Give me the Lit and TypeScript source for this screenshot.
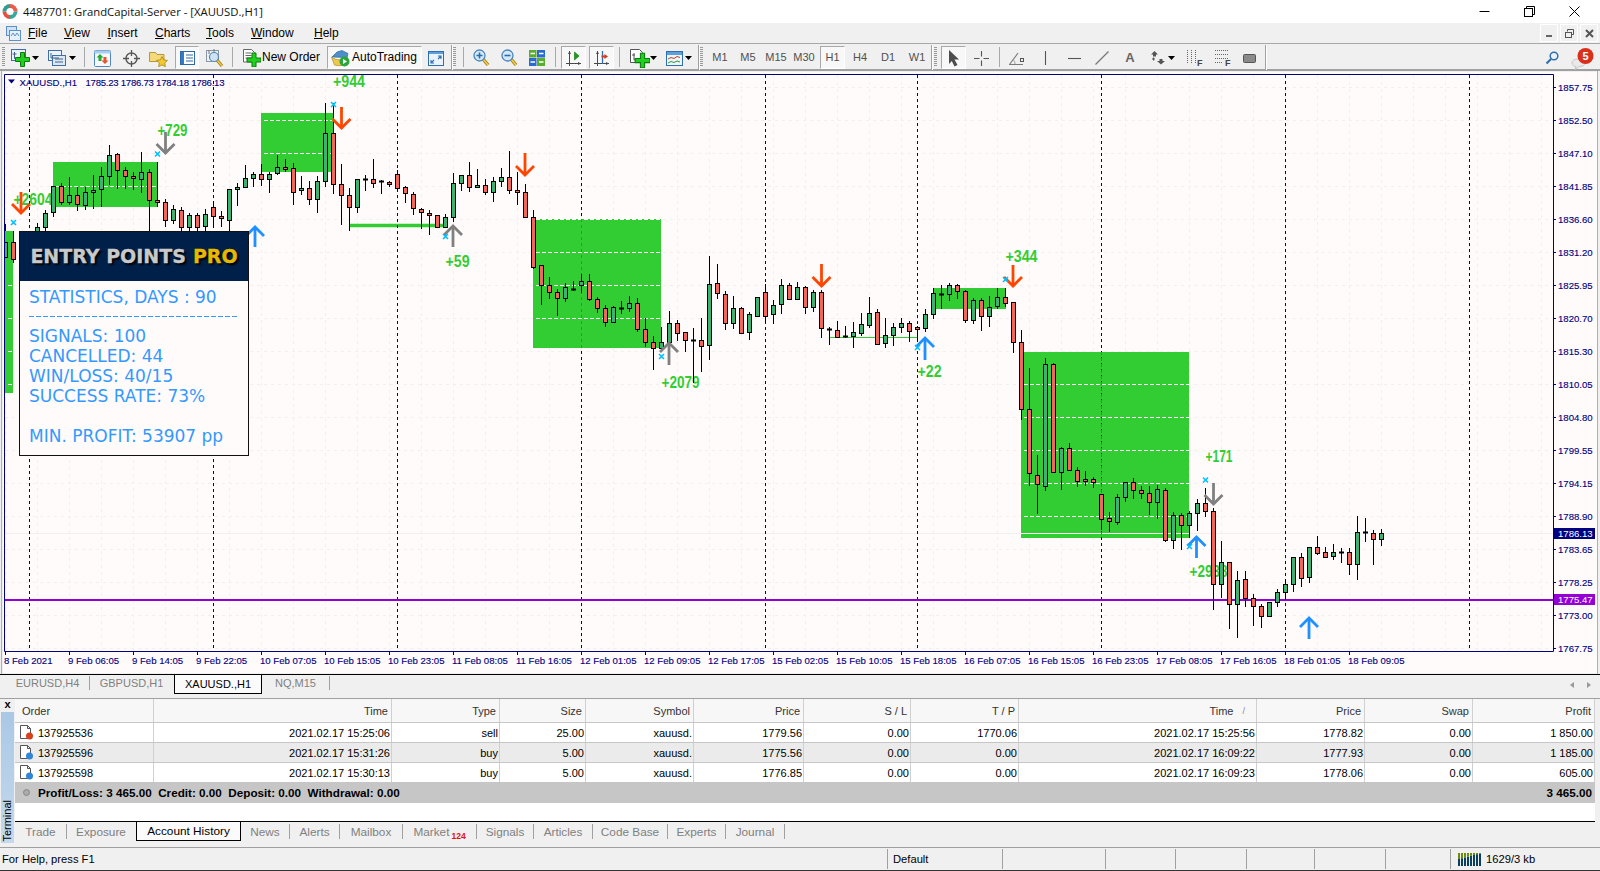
import { LitElement, html, css, svg } from "lit";
import { customElement } from "lit/decorators.js";

type C = [number, number, number, number, string] | null;

const Z4: C[] = [
[462,483,517,560,"g"],[483,578,517,568,"r"],null,null,
[460,490,472,490,"g"],[420,490,428,472,"g"],[349,440,349,427,"g"],[340,405,349,395,"r"],[322,405,376,395,"g"],[352,422,376,403,"r"],[350,420,367,404,"g"],[315,418,361,367,"g"],[292,412,319,358,"g"],[225,345,256,319,"g"],[248,358,253,301,"r"],[292,358,301,319,"r"],[305,360,319,325,"r"],[246,368,305,328,"g"],[297,490,305,390,"r"],[277,410,391,397,"r"],[388,470,397,451,"r"],[405,462,418,451,"g"],[410,490,421,472,"r"],[430,490,436,472,"g"],[430,490,436,470,"r"],[418,490,431,469,"g"],[392,470,412,439,"r"],[422,472,439,445,"r"],[357,490,358,449,"g"],[340,408,352,358,"g"],[286,352,325,352,"g"],[306,350,313,325,"g"],[282,348,313,328,"r"],[305,368,313,328,"g"],[255,314,290,310,"g"],[268,307,290,298,"r"],[278,405,295,365,"r"],[318,375,355,361,"g"],[332,405,355,388,"r"],[318,428,334,388,"g"],[100,350,190,334,"g"],[100,372,190,343,"r"],[282,465,343,376,"r"],[355,482,376,412,"r"],[328,428,328,412,"g"],[315,362,327,329,"g"],[268,355,328,338,"r"],[330,372,333,335,"g"],[332,350,335,341,"r"],[300,362,313,355,"r"],[348,400,352,370,"r"],[365,435,373,415,"r"],[415,478,418,427,"r"],[420,495,428,436,"r"],[436,475,436,472,"r"],[432,475,440,472,"g"],[310,455,340,440,"g"],[315,362,316,340,"g"],[275,365,316,352,"r"],[298,352,344,352,"g"],[328,375,344,367,"r"],[320,395,332,367,"g"],[295,350,322,332,"g"],[243,372,320,361,"r"],[305,405,361,367,"r"],[342,445,367,442,"r"]];

const Z5: C[] = [
[30,208,52,200,"r"],[196,315,196,256,"r"],[232,298,256,277,"r"],[268,348,277,295,"r"],[248,305,262,295,"g"],[243,272,266,268,"g"],[222,278,244,256,"g"],[222,302,244,298,"r"],[290,338,298,325,"r"],[316,380,325,365,"r"],[318,368,322,365,"g"],[304,342,323,325,"g"],[288,335,310,325,"g"],[294,396,310,388,"r"],[355,442,388,427,"r"],[408,510,427,445,"r"],[380,447,427,445,"g"],[334,430,370,427,"g"],[360,422,370,400,"r"],[395,456,397,421,"r"],[384,550,421,423,"g"],[354,516,421,439,"r"],[168,480,253,436,"g"],[192,296,250,280,"r"],[272,390,283,370,"r"],[288,387,325,370,"g"],[322,402,325,398,"r"],[336,420,343,397,"g"],[292,347,292,347,"g"],[253,370,277,347,"r"],[300,372,316,343,"g"],[238,342,256,313,"g"],[250,300,256,296,"r"],[246,300,262,296,"g"],[258,342,262,322,"r"],[270,335,277,322,"g"],[270,414,277,385,"r"],[380,435,388,391,"g"],[364,414,391,410,"r"],[378,415,409,411,"g"],[366,444,397,409,"g"],[340,408,373,400,"g"],[292,384,340,376,"g"],[328,434,337,433,"r"],[354,444,406,430,"g"],[370,438,382,406,"g"],[354,398,370,382,"g"],[364,426,370,394,"r"],[378,420,382,388,"r"],[328,396,343,385,"g"],[264,358,280,343,"g"],[254,326,281,283,"g"],[250,302,254,283,"g"],[252,296,254,274,"r"],[270,368,274,361,"r"],[295,372,301,361,"g"],[295,392,301,349,"r"],[288,380,322,349,"g"],[264,328,292,319,"g"],[264,320,292,310,"r"],[307,458,307,427,"r"],[390,660,427,628,"r"],[505,858,628,820,"r"],[766,942,824,853,"r"],[475,872,493,857,"g"],[490,820,493,815,"r"]];

const Z6: C[] = [
[322,450,325,395,"g"],[310,392,325,389,"r"],[382,440,391,422,"r"],[393,438,418,423,"r"],[412,443,418,425,"r"],[462,570,463,537,"r"],[517,575,534,542,"r"],[462,555,472,545,"g"],[426,485,427,472,"g"],[415,477,427,449,"r"],[438,476,451,458,"r"],[437,525,458,485,"r"],[435,537,448,485,"g"],[443,605,451,599,"r"],[515,627,526,601,"g"],[520,630,526,554,"r"],[514,595,520,554,"g"],[477,572,490,520,"g"],[445,530,490,514,"r"],[505,810,514,733,"r"],[603,775,667,733,"g"],[667,867,667,793,"r"],[693,893,721,793,"g"],[693,800,718,775,"r"],[763,858,775,799,"r"],[793,863,799,829,"r"],[787,832,787,829,"g"],[748,800,757,787,"g"],[718,780,733,755,"g"],[652,755,652,733,"g"],[640,740,652,715,"r"],[622,730,622,712,"g"],[588,645,622,640,"r"],[620,653,637,650,"r"],[612,660,637,649,"g"],[625,670,637,638,"g"],[625,705,637,673,"r"],[528,720,577,671,"g"],[534,605,577,580,"g"],[571,675,580,598,"r"],[568,618,580,598,"g"]];

const conv = (list: C[], y0: number) =>
  list.map((c) => (c ? ([y0 + c[0] / 3, y0 + c[1] / 3, y0 + c[2] / 3, y0 + c[3] / 3, c[4]] as [number, number, number, number, string]) : null));
const candles = [...conv(Z4, 70), ...conv(Z5, 200), ...conv(Z6, 340)];

const snap = (v: number) => Math.round(v) + 0.5;

const prices = ["1857.75","1852.50","1847.10","1841.85","1836.60","1831.20","1825.95","1820.70","1815.30","1810.05","1804.80","1799.55","1794.15","1788.90","1783.65","1778.25","1773.00","1767.75"];
const dates = ["8 Feb 2021","9 Feb 06:05","9 Feb 14:05","9 Feb 22:05","10 Feb 07:05","10 Feb 15:05","10 Feb 23:05","11 Feb 08:05","11 Feb 16:05","12 Feb 01:05","12 Feb 09:05","12 Feb 17:05","15 Feb 02:05","15 Feb 10:05","15 Feb 18:05","16 Feb 07:05","16 Feb 15:05","16 Feb 23:05","17 Feb 08:05","17 Feb 16:05","18 Feb 01:05","18 Feb 09:05"];
const periods = [29.5, 213.5, 397.5, 581.5, 765.5, 917.5, 1101.5, 1285.5, 1469.5];

const boxes: { x: number; y: number; w: number; h: number; dash: number[]; solid?: number }[] = [
  { x: 5, y: 231, w: 8, h: 162, dash: [285, 318, 351, 384] },
  { x: 53, y: 162, w: 105, h: 45, dash: [186] },
  { x: 261, y: 113, w: 73, h: 59, dash: [120, 153] },
  { x: 533, y: 219, w: 128, h: 129, dash: [219, 252, 285, 318] },
  { x: 933, y: 288, w: 73, h: 21, dash: [] },
  { x: 1021, y: 352, w: 168, h: 186, dash: [384, 417, 450, 483, 516], solid: 533 },
];

const labels: [string, number, number, number][] = [
  ["+2604", 13.5, 205, 39], ["+729", 157.5, 136, 30], ["+944", 333, 87, 32], ["+59", 445.5, 267, 24],
  ["+2079", 661.5, 388, 38], ["+22", 917.5, 377, 24], ["+344", 1005.5, 262, 32], ["+171", 1205.5, 462, 27], ["+2938", 1189.5, 577, 38],
];
const arrows: [number, number, number, string, number][] = [
  [21, 192, 213, "#ff4500", 1], [341.5, 107, 128, "#ff4500", 1], [525, 153, 175, "#ff4500", 1], [821.5, 264, 286, "#ff4500", 1], [1013, 265, 286, "#ff4500", 1],
  [165.5, 132, 153, "#808080", 1], [1213.5, 483, 504, "#808080", 1],
  [255, 227, 247, "#1e90ff", 0], [925, 338, 360, "#1e90ff", 0], [1196.5, 537, 558, "#1e90ff", 0], [1309, 618, 639, "#1e90ff", 0],
  [453, 226, 247, "#808080", 0], [669, 343, 365, "#808080", 0],
];
const crosses = [[13.5, 222.5], [157.5, 154], [333.5, 104.5], [445.5, 236.5], [661.5, 356.5], [917.5, 347.5], [1005.5, 279.5], [1205.5, 480], [1189.5, 546.5]];

/* ---------- icons ---------- */
const plus = (x: number, y: number, s = 1) => svg`<path transform="translate(${x} ${y}) scale(${s})" d="M-2-7h4v5h5v4h-5v5h-4v-5h-5v-4h5z" fill="#1fd01f" stroke="#0c7a0c" stroke-width="1"/>`;
const ic = (w: number, h: number, body: unknown) => html`<svg width=${w} height=${h} viewBox="0 0 ${w} ${h}">${body}</svg>`;
const winAxes = svg`<path d="M3.500 3v6.500h8M1.500 5h4M9.500 8v-3" fill="none" stroke="#44648c"/>`;
const caret = html`<svg width="7" height="4" viewBox="0 0 7 4"><path d="M0 0h7L3.500 4z" fill="#000"/></svg>`;
const mag = (inner: unknown) => ic(17, 18, svg`<path d="M10 10l5 6" stroke="#a8841c" stroke-width="3.400"/><path d="M10 10l5 6" stroke="#f4cf50" stroke-width="1.400"/><circle cx="6.500" cy="6.500" r="5.500" fill="#d5e8f7" stroke="#4a86c0" stroke-width="1.300"/>${inner}`);
const chartAxes = (inner: unknown) => ic(17, 17, svg`<path d="M4.500 1v15M1 13.500h15" stroke="#4a4a4a" fill="none"/><path d="M4.500 1l-1.500 3h3zM16 13.500l-3-1.500v3z" fill="#4a4a4a"/>${inner}`);

const I = {
  app: ic(16, 17, svg`<path d="M8 8.500V1a7.500 7.500 0 0 1 7.500 7.500z" fill="#ee5a4a"/><path d="M8 8.500h7.500A7.500 7.500 0 0 1 8 16z" fill="#38a89d"/><path d="M8 8.500V16a7.500 7.500 0 0 1-7.500-7.500z" fill="#e8503e"/><path d="M8 8.500H.5A7.500 7.500 0 0 1 8 1z" fill="#2e9e94"/><circle cx="8" cy="8.500" r="3.600" fill="#fff"/>`),
  menu: ic(16, 16, svg`<rect x="1.500" y="1.500" width="10" height="9" fill="#cfe2f6" stroke="#5f8fc7"/><rect x="4.500" y="5.500" width="11" height="10" fill="#e6f0fb" stroke="#5f8fc7"/><path d="M6 11l2-3 2 3 2-3 2 3" fill="none" stroke="#5f8fc7"/>`),
  newChart: ic(20, 18, svg`<rect x=".5" y=".5" width="14" height="11" fill="#eaf2fb" stroke="#3f6fa8"/>${winAxes}${plus(11.5, 10.500)}`),
  profiles: ic(18, 16, svg`<rect x=".5" y=".5" width="13" height="10" fill="#eef3f9" stroke="#3f6fa8"/><rect x="4.500" y="5.500" width="13" height="10" fill="#dde8f5" stroke="#3f6fa8"/><path d="M3 3v5h8M7 9h8M7 12h8" fill="none" stroke="#44648c"/>`),
  market: ic(17, 17, svg`<rect x=".5" y=".5" width="16" height="16" rx="1" fill="#f5f9fd" stroke="#4f86bf"/><rect x=".5" y=".5" width="16" height="3" fill="#a9cdee"/><path d="M6 4l3.500 3.500H7.500V11h-3V7.500h-2z" fill="#27a82e"/><path d="M11 14l3.500-3.500h-2V7h-3v3.500h-2z" fill="#e5552f"/>`),
  cross: ic(17, 17, svg`<circle cx="8.500" cy="8.500" r="5.500" fill="none" stroke="#555" stroke-width="1.400"/><path d="M8.500 0v6M8.500 11v6M0 8.500h6M11 8.500h6" stroke="#555" stroke-width="1.300"/>`),
  folder: ic(19, 17, svg`<path d="M.5 2.500h6l1.500 2h7v7H.5z" fill="#f6d978" stroke="#b8973b"/><path d="M13 6.500l1.700 3.400 3.800.5-2.800 2.600.7 3.700-3.400-1.800-3.400 1.800.7-3.700-2.800-2.600 3.800-.5z" fill="#f2c92e" stroke="#a8841c" stroke-width=".8"/>`),
  nav: ic(15, 14, svg`<rect x=".5" y=".5" width="14" height="13" fill="#fff" stroke="#2f68a8"/><rect x="1" y="1" width="3" height="12" fill="#2f7bc8"/><path d="M6 4h7M6 7h7M6 10h7" stroke="#2f68a8"/>`),
  magChart: ic(18, 18, svg`<rect x=".5" y="1.500" width="12" height="11" fill="#eef1f4" stroke="#8b96a2"/><path d="M3 1v4M8 0v4" stroke="#777"/><path d="M11 11l5 6" stroke="#a8841c" stroke-width="3.200"/><path d="M11 11l5 6" stroke="#f4cf50" stroke-width="1.200"/><circle cx="8" cy="8" r="4.500" fill="#cfe3f5" stroke="#5088bd" stroke-width="1.200"/>`),
  order: ic(18, 18, svg`<path d="M.5.5h8l3 3v9.500H.5z" fill="#fff" stroke="#666"/><path d="M2.500 4h6M2.500 6.500h6M2.500 9h6" stroke="#666"/>${plus(11, 11)}`),
  auto: ic(19, 17, svg`<path d="M1 7l5-5 5-1.500 6 3-1 4z" fill="#4d8fc9" stroke="#2e6aa0" stroke-width=".7"/><path d="M.5 7c5 4 11 3 16 0v6c-3 3-10 3-13 2z" fill="#f0c94a" stroke="#a88b2a" stroke-width=".7"/><circle cx="13.500" cy="11.500" r="5" fill="#2aa63a"/><path d="M12 9l4 2.500-4 2.500z" fill="#fff"/>`),
  full: ic(16, 15, svg`<rect x=".5" y=".5" width="15" height="14" fill="#eaf3fb" stroke="#2f6fb0" stroke-width="1"/><rect x="1" y="1" width="14" height="2" fill="#5ea1da"/><path d="M3 12l3-3M3 9v3h3M13 5l-3 3M10 5h3v3" fill="none" stroke="#2f6fb0" stroke-width="1.100"/>`),
  zoomIn: mag(svg`<path d="M3.500 6.500h6M6.500 3.500v6" stroke="#2b6cab" stroke-width="1.600"/>`),
  zoomOut: mag(svg`<path d="M3.500 6.500h6" stroke="#2b6cab" stroke-width="1.600"/>`),
  tile: ic(16, 16, svg`<rect width="7.500" height="7.500" fill="#5aad2f"/><rect x="8" width="8" height="7.500" fill="#2a6bd0"/><rect y="8" width="7.500" height="8" fill="#2a6bd0"/><rect x="8" y="8" width="8" height="8" fill="#5aad2f"/><path d="M1.500 3.500h4.500M10 3.500h4.500M1.500 12h4.500M10 12h4.500" stroke="#fff" stroke-width="1.600"/>`),
  shift: chartAxes(svg`<path d="M9.500 2l4.500 4-4.500 4z" fill="#18a018" stroke="#0c6c0c" stroke-width=".6"/>`),
  scroll: chartAxes(svg`<path d="M9.500 1v13" stroke="#2f6fb0" stroke-width="1.300"/><path d="M15 6.500l-3.500-2.500v1.500h-3v2h3v1.500z" fill="#d43c1c"/>`),
  ind: ic(20, 19, svg`<path d="M.5.5h9l3 3v10H.5z" fill="#fff" stroke="#555"/><path d="M4 4v7h6M2 6h3" fill="none" stroke="#555"/>${plus(12.5, 11.5, 1.05)}`),
  tpl: ic(17, 15, svg`<rect x=".5" y=".5" width="16" height="14" fill="#eef4fb" stroke="#2f6fb0"/><rect x="1" y="1" width="15" height="3" fill="#5ea1da"/><path d="M2 8l3-1.500 3 1 3-2 3 1" fill="none" stroke="#b5481c"/><path d="M2 12l3-1.500 3 1 3-1.500 3 1" fill="none" stroke="#2d9c2d"/>`),
  cursor: ic(12, 17, svg`<path d="M1 0l10 9.500H6.500L9.500 15l-3 1.500L3.800 11 1 14z" fill="#4d4d4d"/>`),
  crosshair: ic(15, 15, svg`<path d="M7.500 0v5.500M7.500 9.500V15M0 7.500h5.500M9.500 7.500H15" stroke="#555" stroke-width="1.100"/>`),
  angle: ic(16, 14, svg`<path d="M0 13.500h14M.5 13.500L9 2" fill="none" stroke="#7a7a7a" stroke-width="1.100"/><path d="M6 13c0-2-1-3.500-2-4.500" fill="none" stroke="#999"/><rect x="11.500" y="7.500" width="3" height="3" fill="none" stroke="#555"/>`),
  vline: ic(3, 14, svg`<path d="M1.500 0v14" stroke="#555" stroke-width="1.100"/>`),
  hline: ic(13, 3, svg`<path d="M0 1.500h13" stroke="#555" stroke-width="1.100"/>`),
  tline: ic(14, 14, svg`<path d="M.5 13.500L13.500.5" stroke="#777" stroke-width="1.200"/>`),
  arrowsTool: ic(17, 14, svg`<path d="M4.500 0l3.500 3.500-2 0v2h-3v-2h-2z" fill="#555"/><path d="M11 13.500l4-3.500h-2.500V8h-3v2H7z" fill="#555"/><path d="M2 8h3M3.500 6.500v3" stroke="#555"/>`),
  vgrid: html`<svg width="16" height="17" viewBox="0 0 16 17"><path d="M.5 0v14M4.500 0v14M8.500 0v14" stroke="#666" stroke-dasharray="1 1"/><text x="10" y="16" class="ftxt">F</text></svg>`,
  hgrid: html`<svg width="16" height="17" viewBox="0 0 16 17"><path d="M0 .5h14M0 4.500h14M0 8.500h14M0 12.500h8" stroke="#666" stroke-dasharray="1 1"/><text x="10" y="16" class="ftxt">F</text></svg>`,
  rect: ic(13, 9, svg`<rect x=".5" y=".5" width="12" height="8" rx="1" fill="#8a8a8a" stroke="#555"/>`),
  search: ic(14, 14, svg`<circle cx="9" cy="5" r="3.800" fill="#eaf3fb" stroke="#2f6fb0" stroke-width="1.500"/><path d="M6 8L1.500 12.500" stroke="#2f6fb0" stroke-width="2.200"/>`),
  chat: html`<svg width="24" height="24" viewBox="0 0 24 24"><path d="M7 13c-4 0-6 2-6 4s2 3.500 4 3.500l-1 3 4-3c4 0 6-1.500 6-3.500s-3-4-7-4z" fill="#e9e9e9" stroke="#c4c4c4"/><circle cx="14.500" cy="10" r="8" fill="#d9301c"/><text x="14.500" y="14" class="badge">5</text></svg>`,
  min: ic(11, 11, svg`<path d="M.5 5.500h10" stroke="#000"/>`),
  max: ic(11, 11, svg`<path d="M2.500 2.500v-2h8v8h-2" fill="none" stroke="#000"/><rect x=".5" y="2.500" width="8" height="8" fill="none" stroke="#000"/>`),
  close: ic(11, 11, svg`<path d="M.5.5l10 10M10.500.5l-10 10" stroke="#000"/>`),
  cMin: ic(9, 9, svg`<rect x="1" y="6" width="6" height="2" fill="#666"/>`),
  cMax: ic(9, 9, svg`<path d="M2.500 2.500V.5h6v5h-2" fill="none" stroke="#555"/><rect x=".5" y="3.500" width="6" height="5" fill="none" stroke="#555"/>`),
  cClose: ic(9, 9, svg`<path d="M1 1l7 7M8 1L1 8" stroke="#555" stroke-width="2"/>`),
  doc: (col: string) => ic(15, 15, svg`<path d="M1.500.5h7l3 3v10h-10z" fill="#fff" stroke="#555"/><path d="M8.500.5v3h3" fill="none" stroke="#555"/><circle cx="10.500" cy="11" r="3.500" fill=${col}/>`),
};

const toolbar: { a: number; b: number; c?: unknown; k?: string }[] = [
  { a: 2, b: 5, k: "grip" },
  { a: 11, b: 31, c: I.newChart }, { a: 32, b: 39, c: caret },
  { a: 48, b: 66, c: I.profiles }, { a: 69, b: 76, c: caret },
  { a: 84, b: 85, k: "sep" },
  { a: 94, b: 111, c: I.market }, { a: 123, b: 140, c: I.cross }, { a: 149, b: 168, c: I.folder },
  { a: 175, b: 199, c: I.nav, k: "on" }, { a: 206, b: 224, c: I.magChart },
  { a: 232, b: 233, k: "sep" },
  { a: 243, b: 261, c: I.order }, { a: 262, b: 320, c: "New Order", k: "txt" },
  { a: 327, b: 422, c: html`${I.auto}<span class="atxt">AutoTrading</span>`, k: "on wide" },
  { a: 428, b: 444, c: I.full },
  { a: 451, b: 452, k: "edge" }, { a: 453, b: 456, k: "grip" }, { a: 463, b: 464, k: "sep" },
  { a: 473, b: 490, c: I.zoomIn }, { a: 501, b: 518, c: I.zoomOut }, { a: 529, b: 545, c: I.tile },
  { a: 555, b: 556, k: "sep" },
  { a: 561, b: 586, c: I.shift, k: "on" }, { a: 589, b: 614, c: I.scroll, k: "on" },
  { a: 619, b: 620, k: "sep" },
  { a: 630, b: 650, c: I.ind }, { a: 650, b: 657, c: caret }, { a: 666, b: 683, c: I.tpl }, { a: 685, b: 692, c: caret },
  { a: 698, b: 699, k: "edge" }, { a: 700, b: 703, k: "grip" },
  { a: 707, b: 733, c: "M1", k: "tf" }, { a: 735, b: 761, c: "M5", k: "tf" }, { a: 763, b: 789, c: "M15", k: "tf" }, { a: 791, b: 817, c: "M30", k: "tf" },
  { a: 820, b: 845, c: "H1", k: "tf on" }, { a: 847, b: 873, c: "H4", k: "tf" }, { a: 875, b: 901, c: "D1", k: "tf" }, { a: 904, b: 930, c: "W1", k: "tf" },
  { a: 931, b: 932, k: "edge" }, { a: 934, b: 937, k: "grip" },
  { a: 941, b: 966, c: I.cursor, k: "on" }, { a: 972, b: 990, c: I.crosshair },
  { a: 999, b: 1000, k: "sep" },
  { a: 1009, b: 1025, c: I.angle }, { a: 1036, b: 1054, c: I.vline }, { a: 1065, b: 1083, c: I.hline }, { a: 1095, b: 1109, c: I.tline },
  { a: 1120, b: 1140, c: "A", k: "atool" }, { a: 1150, b: 1167, c: I.arrowsTool }, { a: 1168, b: 1175, c: caret },
  { a: 1187, b: 1203, c: I.vgrid }, { a: 1215, b: 1231, c: I.hgrid }, { a: 1243, b: 1256, c: I.rect },
  { a: 1265, b: 1266, k: "edge" },
  { a: 1545, b: 1559, c: I.search }, { a: 1571, b: 1595, c: I.chat },
];

const chartTabs: [number, number, string, boolean][] = [[6, 90, "EURUSD,H4", false], [90, 174, "GBPUSD,H1", false], [174, 262, "XAUUSD.,H1", true], [262, 330, "NQ,M15", false]];
const termTabs: [number, number, string, boolean][] = [
  [15, 67, "Trade", false], [67, 136, "Exposure", false], [136, 241, "Account History", true], [241, 290, "News", false], [290, 340, "Alerts", false], [340, 403, "Mailbox", false],
  [403, 477, "Market", false], [477, 534, "Signals", false], [534, 593, "Articles", false], [593, 668, "Code Base", false], [668, 726, "Experts", false], [726, 785, "Journal", false],
];
const colW = [139, 238, 108, 86, 108, 110, 107, 108, 238, 108, 108, 122];
const head = ["Order", "Time", "Type", "Size", "Symbol", "Price", "S / L", "T / P", "Time", "Price", "Swap", "Profit"];
const rows = [
  ["137925536", "2021.02.17 15:25:06", "sell", "25.00", "xauusd.", "1779.56", "0.00", "1770.06", "2021.02.17 15:25:56", "1778.82", "0.00", "1 850.00"],
  ["137925596", "2021.02.17 15:31:26", "buy", "5.00", "xauusd.", "1775.56", "0.00", "0.00", "2021.02.17 16:09:22", "1777.93", "0.00", "1 185.00"],
  ["137925598", "2021.02.17 15:30:13", "buy", "5.00", "xauusd.", "1776.85", "0.00", "0.00", "2021.02.17 16:09:23", "1778.06", "0.00", "605.00"],
];
const statusEdges = [888, 1003, 1106, 1176, 1247, 1315, 1386, 1451, 1600];

@customElement("app-root")
export class AppRoot extends LitElement {
  static styles = css`
    :host { display: block; width: 1600px; height: 871px; overflow: hidden; background: #f0f0f0; font-family: "Liberation Sans", sans-serif; font-size: 11px; color: #000; }
    .page { display: flex; flex-direction: column; height: 871px; }
    .title { height: 23px; background: #fff; display: flex; align-items: center; padding: 0 3px 0 2px; font: 11.3px "Open Sans", sans-serif; color: #111; }
    .title .t { margin-left: 5px; flex: 1; }
    .wbtn { width: 45px; display: flex; justify-content: center; }
    .menu { height: 20px; display: flex; align-items: center; padding: 0 2px 0 5px; font-size: 12px; }
    .menu .m { position: relative; }
    .menu u { text-decoration: underline; }
    .menu .sp { flex: 1; }
    .cbtn { width: 16px; height: 16px; border: 1px solid #fff; margin-left: 2px; display: flex; align-items: center; justify-content: center; }
    .tools { height: 28px; box-sizing: border-box; border-top: 1px solid #a8a8a8; border-bottom: 2px solid #a0a0a0; display: flex; align-items: center; padding-top: 1px; }
    .tb { display: flex; align-items: center; justify-content: center; flex: none; height: 23px; box-sizing: border-box; }
    .tb svg { margin-top: 2px; }
    .tb.txt { font-size: 12px; white-space: nowrap; justify-content: flex-start; }
    .atxt { font-size: 12px; margin-left: 2px; }
    .tb.sep { height: 20px; background: #a8a8a8; }
    .tb.edge { height: 25px; background: #a0a0a0; box-shadow: 1px 0 0 #fff; }
    .tb.grip { height: 20px; background: repeating-linear-gradient(#9a9a9a 0 1px, transparent 1px 2px); }
    .tb.on { border: 1px solid; border-color: #a8a8a8 #fff #fff #a8a8a8; background: #f8f8f8; }
    .tb.wide { justify-content: flex-start; padding-left: 3px; }
    .tb.tf { color: #505050; font-size: 11px; }
    .tb.atool { color: #666; font-size: 13px; font-weight: bold; }
    .ftxt { font: bold 9px "Liberation Sans", sans-serif; fill: #444; }
    .badge { font: bold 11px "Liberation Sans", sans-serif; fill: #fff; text-anchor: middle; }
    .chart { position: relative; height: 603px; background: #f0f0f0; flex: none; }
    .chart > svg { display: block; }
    .ax { font: 9.6px "Liberation Sans", sans-serif; fill: #000080; stroke: #000080; stroke-width: .12px; }
    .lab { font: bold 16px "Liberation Sans", sans-serif; fill: #32cd32; }
    .whitetxt { font: 9.6px "Liberation Sans", sans-serif; fill: #fff; }
    .panel { position: absolute; left: 19px; top: 160px; width: 230px; height: 225px; box-sizing: border-box; border: 1px solid #111; background: #fffbfa; font-family: "DejaVu Sans", sans-serif; color: #3399ff; font-size: 17px; }
    .phead { height: 49px; padding-bottom: 1px; box-sizing: border-box; background: #00204a; display: flex; align-items: center; justify-content: center; font: bold 19px "DejaVu Sans", sans-serif; color: #c9c9c9; text-shadow: 2px 2px 2px #000; white-space: nowrap; -webkit-text-stroke: .3px currentColor; }
    .phead b { color: #e6b800; margin-left: 7px; }
    .pbody { padding: 6px 9px 0; }
    .pl { height: 20px; line-height: 20px; white-space: nowrap; }
    .dash { height: 1px; margin: 9px 0 9px; background: repeating-linear-gradient(90deg, #3399ff 0 5px, transparent 5px 7px); }
    .gapl { margin-top: 20px; }
    .tabs { height: 20px; flex: none; box-sizing: border-box; border-top: 1px solid #000; display: flex; background: #f0f0f0; color: #808080; position: relative; padding-left: 6px; }
    .tabs .tab { font-size: 11px; margin-top: 1px; }
    .tab { flex: none; box-sizing: border-box; display: flex; align-items: center; justify-content: center; border-right: 1px solid #a0a0a0; height: 14px; margin-top: 2px; font-size: 11.8px; white-space: nowrap; }
    .tabs .tab.on, .tab.on { background: #fbfbfb; color: #000; height: 19px; margin-top: 0; border: 1px solid #000; border-top: 0; }
    .tab.pre { border-right-color: transparent; }
    .tabarrows { margin-left: auto; display: flex; gap: 13px; padding-right: 9px; align-items: center; }
    .tri { width: 0; height: 0; border: 3px solid transparent; }
    .tri.tl { border-right: 4px solid #999; border-left: 0; }
    .tri.tr { border-left: 4px solid #999; border-right: 0; }
    .gap4 { height: 4px; flex: none; }
    .term { height: 145px; flex: none; display: flex; border-top: 1px solid #a0a0a0; box-sizing: border-box; }
    .side { width: 15px; flex: none; display: flex; flex-direction: column; align-items: center; }
    .xbtn { height: 13px; font-weight: bold; font-size: 11px; line-height: 11px; }
    .bar { flex: 1; width: 13px; background: linear-gradient(#a9c8e6, #c6d9ec); display: flex; flex-direction: column; justify-content: flex-end; align-items: center; }
    .vt { writing-mode: vertical-rl; transform: rotate(180deg); font-size: 11px; line-height: 13px; padding-top: 1px; }
    .tw { flex: 1; background: #fff; display: flex; flex-direction: column; min-width: 0; margin-right: 5px; }
    .r { display: flex; height: 20px; flex: none; box-sizing: border-box; }
    .r.h { height: 24px; background: #f7f7f7; border-bottom: 1px solid #c6c6c6; }
    .r.d { border-bottom: 1px solid #c6c6c6; }
    .r.alt { background: #ebebeb; }
    .c { flex: none; box-sizing: border-box; display: flex; align-items: center; justify-content: flex-end; padding-right: 1px; border-right: 1px solid #d0d0d0; white-space: nowrap; overflow: hidden; }
    .r.h .c { padding-right: 3px; color: #333; }
    .r.h .c.first-c { justify-content: flex-start; padding-left: 7px; }
    .c.first-c { justify-content: flex-start; padding-left: 4px; }
    .num { margin-left: 4px; }
    .sort { margin-left: 9px; margin-right: 8px; color: #888; font-size: 9px; }
    .tot { height: 20px; background: #c6c6c6; display: flex; align-items: center; font-weight: bold; font-size: 11.7px; padding: 0 3px 1px 8px; flex: none; box-sizing: border-box; }
    .dot { width: 7px; height: 7px; border-radius: 50%; background: #aaa; border: 1px solid #888; box-sizing: border-box; margin-right: 8px; }
    .tot .s { flex: 1; }
    .blank { flex: 1; }
    .ttabs { height: 22px; flex: none; box-sizing: border-box; border-top: 1px solid #000; display: flex; background: #f0f0f0; color: #808080; padding-right: 5px; }
    .ttabs .tab { height: 15px; margin-top: 2px; }
    .ttabs .tab.on { height: 19px; margin-top: 0; }
    .mk { color: #e01010; font-size: 8.5px; margin: 8px 0 0 2px; font-weight: bold; }
    .status { height: 24px; flex: none; box-sizing: border-box; border-top: 1px solid #a0a0a0; border-bottom: 1px solid #333; display: flex; align-items: center; font-size: 11.2px; }
    .st { height: 20px; flex: none; box-sizing: border-box; display: flex; align-items: center; border-right: 1px solid #a0a0a0; padding-left: 2px; }
    .st.pl5 { padding-left: 5px; }
    .st.nb { border-right: 0; gap: 4px; padding-left: 7px; }
  `;

  private chart() {
    const H = [0, 1, 2, 3, 4, 5, 6, 7, 8, 9, 10, 11, 12, 13, 14, 15, 16, 17].map((k) => `M5 ${87.5 + 33 * k}H1553`).join("");
    let V = "";
    for (let x = 5.5; x < 1553; x += 32) V += `M${x} 75V651`;
    return svg`
      <defs><clipPath id="plot"><rect x="5" y="75" width="1548" height="576"/></clipPath></defs>
      <rect x="0" y="71" width="1600" height="603" fill="#f0f0f0"/>
      <rect x="3" y="72" width="1594" height="601" fill="#fffbfa"/>
      <path d="M1.500 71V674M1597.500 71V674" stroke="#b0b0b0"/>
      <path d=${H} stroke="#f1f0ee" stroke-dasharray="3 4" fill="none"/>
      <path d=${V} stroke="#f1f0ee" stroke-dasharray="3 4" fill="none"/>
      <path d="M5 533.500H1553" stroke="#f1f0ee"/>
      <g clip-path="url(#plot)">
      ${boxes.map((b) => svg`
        <rect x=${b.x} y=${b.y} width=${b.w} height=${b.h} fill="#32cd32"/>
        ${b.dash.map((y) => svg`<path d="M${b.x + 3} ${y + 0.5}H${b.x + b.w}" stroke="#fff" stroke-dasharray="4 2"/>`)}
        ${b.solid ? svg`<path d="M${b.x} ${b.solid + 0.5}H${b.x + b.w}" stroke="#fff"/>` : null}
      `)}
      <path d="M349.500 225.500H446" stroke="#32cd32" stroke-width="3.500"/>
      <path d="M830 337.500H917" stroke="#32cd32"/>
      ${labels.map(([t, x, y, w]) => svg`<text class="lab" x=${x} y=${y} textLength=${w} lengthAdjust="spacingAndGlyphs">${t}</text>`)}
      ${periods.map((x) => svg`<path d="M${x} 75V651" stroke="#000080" stroke-dasharray="3 3"/>`)}
      <path d="M581.500 219V348M1101.500 352V538" stroke="#e03a3a" stroke-dasharray="3 3"/>
      <path d="M5 600H1553" stroke="#9400d3" stroke-width="2"/>
      ${candles.map((c, i) => {
        if (!c) return null;
        const x = 5.5 + 8 * i;
        const [wt, wb, bt, bb, col] = c;
        const t = snap(bt), b = snap(bb);
        const wick = svg`<path d="M${x} ${Math.round(wt)}V${Math.round(wb)}" stroke="#000"/>`;
        if (b - t < 1.5) return svg`${wick}<path d="M${x - 2.5} ${t}h5" stroke="#000" stroke-width="2"/>`;
        return svg`${wick}<rect x=${x - 2} y=${t} width="4" height=${b - t} fill=${col === "r" ? "#f4665a" : "#3cb371"} stroke="#000"/>`;
      })}
      ${arrows.map(([x, t, b, col, down]) => {
        const tip = down ? b : t;
        const back = down ? b - 9 : t + 9;
        return svg`<path d="M${x} ${t}V${b}" stroke=${col} stroke-width="2.800"/><path d="M${x - 9} ${back}L${x} ${tip}L${x + 9} ${back}" fill="none" stroke=${col} stroke-width="2.800"/>`;
      })}
      ${crosses.map(([x, y]) => svg`<path d="M${x - 2.5} ${y - 2.5}l5 5M${x + 2.5} ${y - 2.5}l-5 5" stroke="#00bfff" stroke-width="1.600"/>`)}
      </g>
      <path d="M4.500 74.500H1553.500V651.500H4.500z" fill="none" stroke="#000080"/>
      <path d="M8 79.500h7l-3.500 4z" fill="#000080"/>
      <text class="ax" x="19.500" y="86">XAUUSD.,H1</text>
      <text class="ax" x="85.500" y="86" textLength="139" lengthAdjust="spacing">1785.23 1786.73 1784.18 1786.13</text>
      ${prices.map((p, k) => svg`<path d="M1553 ${87.5 + 33 * k}h3" stroke="#000080"/><text class="ax" x="1558" y=${91 + 33 * k}>${p}</text>`)}
      <rect x="1554" y="528" width="41" height="11" fill="#000080"/><text class="whitetxt" x="1558" y="537">1786.13</text>
      <rect x="1554" y="594" width="41" height="11" fill="#9400d3"/><text class="whitetxt" x="1558" y="603">1775.47</text>
      ${dates.map((d, k) => svg`<path d="M${5.5 + 64 * k} 651v4" stroke="#000080"/><text class="ax" x=${4 + 64 * k} y="664">${d}</text>`)}
    `;
  }

  private tabBar(list: [number, number, string, boolean][], start: number) {
    let prev = start;
    return list.map(([a, b, t, on], i) => {
      const w = b - prev;
      prev = b;
      const nextOn = list[i + 1]?.[3];
      return html`<div class="tab ${on ? "on" : ""} ${nextOn ? "pre" : ""}" style="width:${w}px">${t}${t === "Market" ? html`<span class="mk">124</span>` : null}</div>`;
    });
  }

  render() {
    let prev = 0;
    let sPrev = 0;
    return html`<div class="page">
      <div class="title">${I.app}<span class="t">4487701: GrandCapital-Server - [XAUUSD.,H1]</span>
        <div class="wbtn">${I.min}</div><div class="wbtn">${I.max}</div><div class="wbtn">${I.close}</div></div>
      <div class="menu">${I.menu}
        ${[[28,"F","ile"],[64,"V","iew"],[107.5,"I","nsert"],[155,"C","harts"],[206,"T","ools"],[251,"W","indow"],[314,"H","elp"]].map((m, i, arr) => {
          const x = m[0] as number;
          const w = (i + 1 < arr.length ? (arr[i + 1][0] as number) : x + 30) - x;
          return html`<span class="m" style="${i === 0 ? "margin-left:7px;" : ""}width:${w}px"><u>${m[1]}</u>${m[2]}</span>`;
        })}
        <span class="sp"></span>
        <div class="cbtn">${I.cMin}</div><div class="cbtn">${I.cMax}</div><div class="cbtn">${I.cClose}</div>
      </div>
      <div class="tools">
        ${toolbar.map((t) => {
          const ml = t.a - prev;
          prev = t.b;
          return html`<div class="tb ${t.k ?? ""}" style="margin-left:${ml}px;width:${t.b - t.a}px">${t.c}</div>`;
        })}
      </div>
      <div class="chart">
        <svg width="1600" height="603" viewBox="0 71 1600 603">${this.chart()}</svg>
        <div class="panel">
          <div class="phead">ENTRY POINTS<b>PRO</b></div>
          <div class="pbody">
            <div class="pl">STATISTICS, DAYS : 90</div>
            <div class="dash"></div>
            <div class="pl">SIGNALS: 100</div>
            <div class="pl">CANCELLED: 44</div>
            <div class="pl">WIN/LOSS: 40/15</div>
            <div class="pl">SUCCESS RATE: 73%</div>
            <div class="pl gapl">MIN. PROFIT: 53907 pp</div>
          </div>
        </div>
      </div>
      <div class="tabs">${this.tabBar(chartTabs, 6)}
        <div class="tabarrows"><span class="tri tl"></span><span class="tri tr"></span></div></div>
      <div class="gap4"></div>
      <div class="term">
        <div class="side"><div class="xbtn">x</div><div class="bar"><span class="vt">Terminal</span></div></div>
        <div class="tw">
          <div class="r h">${head.map((h, i) => html`<div class="c ${i === 0 ? "first-c" : ""}" style="width:${colW[i]}px">${h}${i === 8 ? html`<span class="sort">/</span>` : null}</div>`)}</div>
          ${rows.map((r, ri) => html`<div class="r d ${ri === 1 ? "alt" : ""}">${r.map((v, i) => html`<div class="c ${i === 0 ? "first-c" : ""}" style="width:${colW[i]}px">${i === 0 ? html`${I.doc(ri === 0 ? "#d8401c" : "#2f86d8")}<span class="num">${v}</span>` : v}</div>`)}</div>`)}
          <div class="tot"><span class="dot"></span><span class="s">Profit/Loss: 3 465.00&nbsp; Credit: 0.00&nbsp; Deposit: 0.00&nbsp; Withdrawal: 0.00</span><span>3 465.00</span></div>
          <div class="blank"></div>
          <div class="ttabs">${this.tabBar(termTabs, 15)}</div>
        </div>
      </div>
      <div class="gap4"></div>
      <div class="status">
        ${statusEdges.map((e, i) => {
          const w = e - sPrev;
          sPrev = e;
          if (i === 0) return html`<div class="st" style="width:${w}px">For Help, press F1</div>`;
          if (i === 1) return html`<div class="st pl5" style="width:${w}px">Default</div>`;
          if (i === statusEdges.length - 1) return html`<div class="st nb" style="width:${w}px">
            <svg width="24" height="13" viewBox="0 0 24 13">${[0,1,2,3,4,5,6,7].map((k) => svg`<rect x=${k * 3} y=${6 - k * 0.8} width="2" height=${7 + k * 0.8} fill="#0a3f5f"/><rect x=${k * 3} y="0" width="2" height=${6 - k * 0.8} fill="#6a8a10"/>`)}</svg>
            <span>1629/3 kb</span></div>`;
          return html`<div class="st" style="width:${w}px"></div>`;
        })}
      </div>
    </div>`;
  }
}
